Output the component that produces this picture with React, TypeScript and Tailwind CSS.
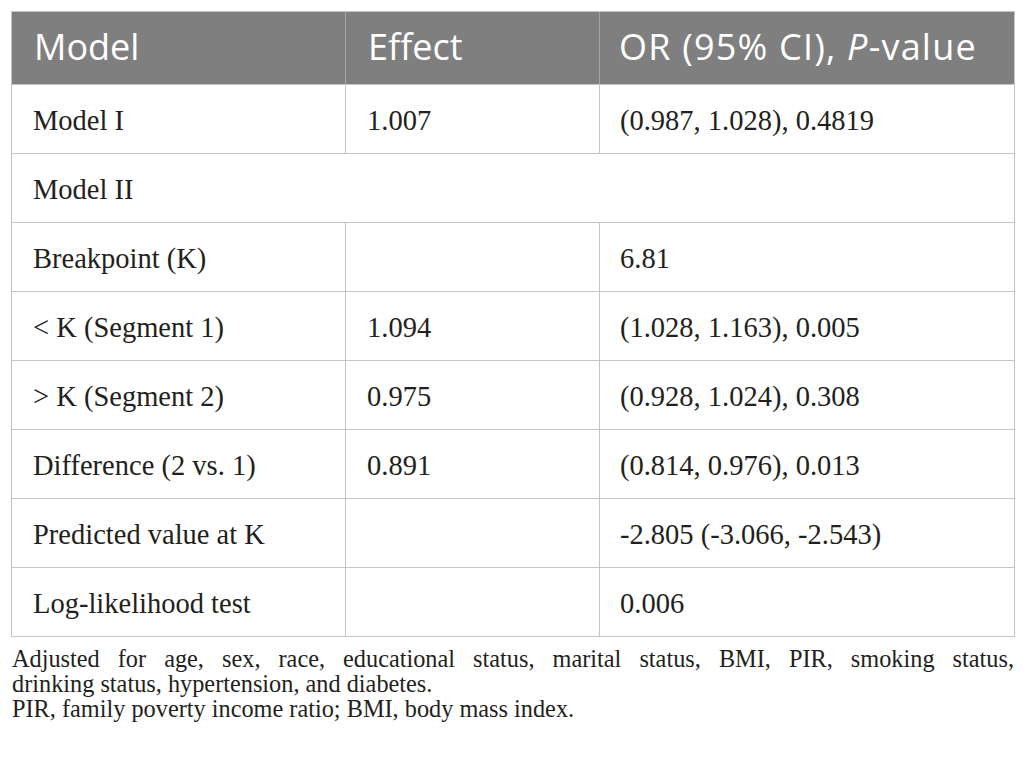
const rows: { a: string; b?: string; c?: string; span?: boolean }[] = [
  { a: "Model I", b: "1.007", c: "(0.987, 1.028), 0.4819" },
  { a: "Model II", span: true },
  { a: "Breakpoint (K)", b: "", c: "6.81" },
  { a: "< K (Segment 1)", b: "1.094", c: "(1.028, 1.163), 0.005" },
  { a: "> K (Segment 2)", b: "0.975", c: "(0.928, 1.024), 0.308" },
  { a: "Difference (2 vs. 1)", b: "0.891", c: "(0.814, 0.976), 0.013" },
  { a: "Predicted value at K", b: "", c: "-2.805 (-3.066, -2.543)" },
  { a: "Log-likelihood test", b: "", c: "0.006" },
];

const serif = "font-['Liberation_Serif','Times_New_Roman',serif]";

export default function App() {
  return (
    <div className="bg-white min-h-[762px] px-[11px] pt-[11px] text-[#231f20]">
      <div className="border border-[#c4c4c4]">
        <div className="grid grid-cols-[333px_254px_1fr] h-[72px] bg-[#7f7f7f] text-white font-['Open_Sans',sans-serif] text-[36px] leading-[40px]">
          <div className="pl-[22px] pt-[15px]">Model</div>
          <div className="border-l border-[#a5a5a5] pl-[22px] pt-[15px]">Effect</div>
          <div className="border-l border-[#a5a5a5] pl-[19px] pt-[15px] tracking-[1.2px]">
            OR (95% CI), <span className="italic">P</span>-value
          </div>
        </div>
        {rows.map((r) =>
          r.span ? (
            <div key={r.a} className={`h-[69px] border-t border-[#c4c4c4] ${serif} text-[28.5px] leading-[32px] pl-[21px] pt-[20px]`}>
              {r.a}
            </div>
          ) : (
            <div key={r.a} className={`grid grid-cols-[333px_254px_1fr] h-[69px] border-t border-[#c4c4c4] ${serif} text-[28.5px] leading-[32px]`}>
              <div className="pl-[21px] pt-[20px]">{r.a}</div>
              <div className="border-l border-[#c4c4c4] pl-[21px] pt-[20px]">{r.b}</div>
              <div className="border-l border-[#c4c4c4] pl-[20px] pt-[20px]">{r.c}</div>
            </div>
          )
        )}
      </div>
      <div className={`${serif} text-[24.3px] leading-[25px] mt-[9px] px-[1px]`}>
        <p className="text-justify [text-align-last:justify]">
          Adjusted for age, sex, race, educational status, marital status, BMI, PIR, smoking status,
        </p>
        <p>drinking status, hypertension, and diabetes.</p>
        <p>PIR, family poverty income ratio; BMI, body mass index.</p>
      </div>
    </div>
  );
}
